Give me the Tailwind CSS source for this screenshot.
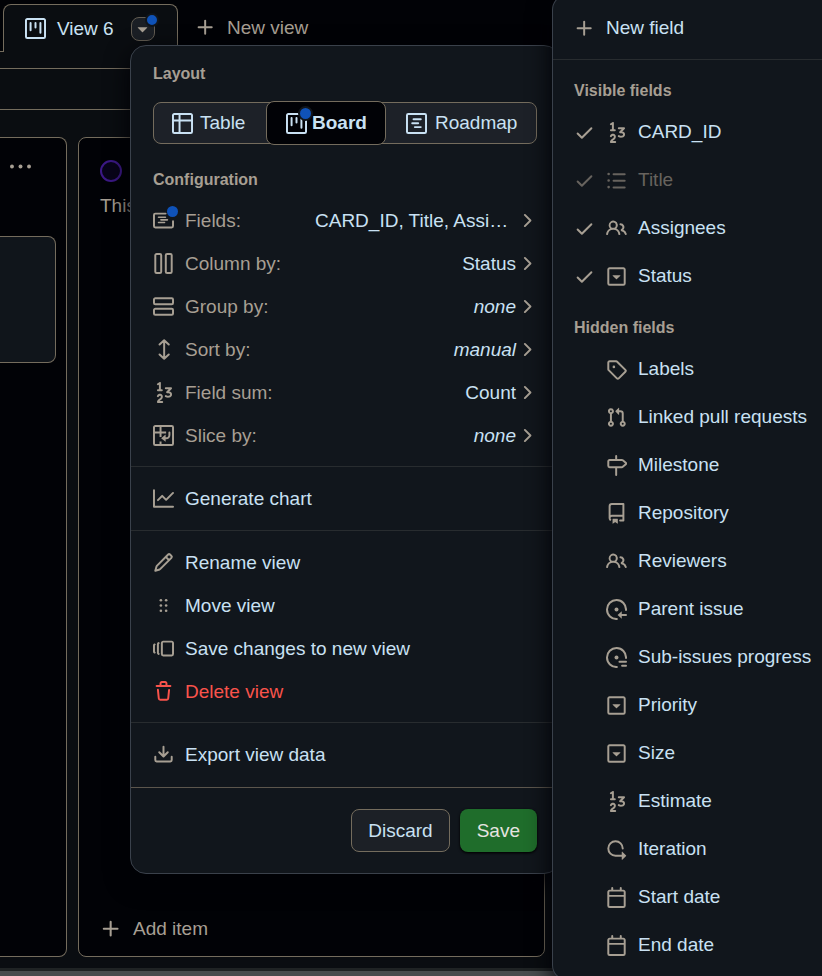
<!DOCTYPE html>
<html lang="en">
<head>
<meta charset="utf-8">
<meta name="viewport" content="width=device-width, initial-scale=1">
<title>Project board</title>
<script src="https://cdn.jsdelivr.net/npm/@tailwindcss/browser@4"></script>
</head>
<body class="bg-[#010206] font-['Liberation_Sans',Arial,sans-serif] text-[19px] leading-6 text-[#c9e1f3]">
<svg class="hidden" aria-hidden="true">
<symbol id="project" viewBox="0 0 16 16"><path d="M1.75 0h12.5C15.216 0 16 .784 16 1.75v12.5A1.75 1.75 0 0 1 14.25 16H1.75A1.75 1.75 0 0 1 0 14.25V1.75C0 .784.784 0 1.75 0ZM1.5 1.75v12.5c0 .138.112.25.25.25h12.5a.25.25 0 0 0 .25-.25V1.75a.25.25 0 0 0-.25-.25H1.75a.25.25 0 0 0-.25.25ZM11.75 3a.75.75 0 0 1 .75.75v7.5a.75.75 0 0 1-1.5 0v-7.5a.75.75 0 0 1 .75-.75Zm-8.25.75a.75.75 0 0 1 1.5 0v5.5a.75.75 0 0 1-1.5 0ZM8 3a.75.75 0 0 1 .75.75v3.5a.75.75 0 0 1-1.5 0v-3.5A.75.75 0 0 1 8 3Z"/></symbol>
<symbol id="table" viewBox="0 0 16 16"><path d="M0 1.75C0 .784.784 0 1.75 0h12.5C15.216 0 16 .784 16 1.75v12.5A1.75 1.75 0 0 1 14.25 16H1.75A1.75 1.75 0 0 1 0 14.25ZM6.5 6.5v8h7.75a.25.25 0 0 0 .25-.25V6.5Zm8-1.5V1.75a.25.25 0 0 0-.25-.25H6.5V5Zm-13 1.5v7.75c0 .138.112.25.25.25H5v-8ZM5 5V1.5H1.75a.25.25 0 0 0-.25.25V5Z"/></symbol>
<symbol id="roadmap" viewBox="0 0 16 16"><rect x=".75" y=".75" width="14.5" height="14.5" rx="1" fill="none" stroke="currentColor" stroke-width="1.5"/><path d="M4.75 7a.75.75 0 0 0 0 1.5h4.5a.75.75 0 0 0 0-1.5h-4.5ZM5 4.75A.75.75 0 0 1 5.75 4h5.5a.75.75 0 0 1 0 1.5h-5.5A.75.75 0 0 1 5 4.75ZM6.75 10a.75.75 0 0 0 0 1.5h4.5a.75.75 0 0 0 0-1.5h-4.5Z"/></symbol>
<symbol id="note" viewBox="0 0 16 16"><path d="M9.6 2.75H1.75a1 1 0 0 0-1 1v8.5a1 1 0 0 0 1 1h12.5a1 1 0 0 0 1-1V8.5" fill="none" stroke="currentColor" stroke-width="1.5" stroke-linecap="round"/><path d="M4.2 5.5h5.3M6 7.5h5M4.2 9.5h4.6" fill="none" stroke="currentColor" stroke-width="1.2" stroke-linecap="round"/></symbol>
<symbol id="columns" viewBox="0 0 16 16"><path d="M2.75.75h2.5a1 1 0 0 1 1 1v12.5a1 1 0 0 1-1 1h-2.5a1 1 0 0 1-1-1V1.75a1 1 0 0 1 1-1Zm8 0h2.5a1 1 0 0 1 1 1v12.5a1 1 0 0 1-1 1h-2.5a1 1 0 0 1-1-1V1.75a1 1 0 0 1 1-1Z" fill="none" stroke="currentColor" stroke-width="1.5"/></symbol>
<symbol id="rows" viewBox="0 0 16 16"><path d="M1.75 1.75h12.5a1 1 0 0 1 1 1v2.5a1 1 0 0 1-1 1H1.75a1 1 0 0 1-1-1v-2.5a1 1 0 0 1 1-1Zm0 8h12.5a1 1 0 0 1 1 1v2.5a1 1 0 0 1-1 1H1.75a1 1 0 0 1-1-1v-2.5a1 1 0 0 1 1-1Z" fill="none" stroke="currentColor" stroke-width="1.5"/></symbol>
<symbol id="sort" viewBox="0 0 16 16"><path d="M8.5 1v14M5 4.2 8.5.9 12 4.2M5 11.8l3.5 3.3 3.5-3.3" fill="none" stroke="currentColor" stroke-width="1.5" stroke-linecap="round" stroke-linejoin="round"/></symbol>
<symbol id="number" viewBox="0 0 16 16"><path d="M9 4.75A.75.75 0 0 1 9.75 4h4a.75.75 0 0 1 .53 1.28l-1.89 1.892c.312.076.604.18.867.319.742.391 1.244 1.063 1.244 2.005 0 .653-.231 1.208-.629 1.627-.386.408-.894.653-1.408.777-1.01.243-2.225.063-3.124-.527a.751.751 0 0 1 .822-1.254c.534.35 1.32.474 1.951.322.306-.073.53-.201.67-.349.129-.136.218-.32.218-.596 0-.308-.123-.509-.444-.678-.373-.197-.98-.318-1.806-.318a.75.75 0 0 1-.53-1.28l1.72-1.72H9.75A.75.75 0 0 1 9 4.75Zm-3.587 5.763c-.35-.05-.77.113-.983.572a.75.75 0 1 1-1.36-.632c.508-1.094 1.589-1.565 2.558-1.425 1 .145 1.872.945 1.872 2.222 0 1.433-1.088 2.192-1.79 2.681-.308.216-.571.397-.772.573H7a.75.75 0 0 1 0 1.5H3.75a.75.75 0 0 1-.75-.75c0-.69.3-1.211.67-1.61.348-.372.8-.676 1.15-.92.8-.56 1.18-.904 1.18-1.474 0-.473-.267-.69-.587-.737ZM5.604.089A.75.75 0 0 1 6 .75v4.77h.711a.75.75 0 0 1 0 1.5H3.759a.75.75 0 0 1 0-1.5H4.5V2.15l-.334.223a.75.75 0 0 1-.832-1.248l1.5-1a.75.75 0 0 1 .77-.037Z"/></symbol>
<symbol id="slice" viewBox="0 0 16 16"><path d="M1.75.75h12.5a1 1 0 0 1 1 1v12.5a1 1 0 0 1-1 1H1.75a1 1 0 0 1-1-1V1.75a1 1 0 0 1 1-1ZM5.75 1v8.2M5.75 12.6V15M1 5.75h9" fill="none" stroke="currentColor" stroke-width="1.5"/><path d="M12.5 5.7v2a2.3 2.3 0 0 1-2.3 2.4H9" fill="none" stroke="currentColor" stroke-width="1.5" stroke-linecap="round"/><path d="M9.6 7.2v5.6L6.2 10.1Z"/></symbol>
<symbol id="chevron" viewBox="0 0 16 16"><path d="M6.22 3.22a.75.75 0 0 1 1.06 0l4.25 4.25a.75.75 0 0 1 0 1.06l-4.25 4.25a.751.751 0 0 1-1.042-.018.751.751 0 0 1-.018-1.042L9.94 8 6.22 4.28a.75.75 0 0 1 0-1.06Z"/></symbol>
<symbol id="caret" viewBox="0 0 16 16"><path d="m4.427 7.427 3.396 3.396a.25.25 0 0 0 .354 0l3.396-3.396A.25.25 0 0 0 11.396 7H4.604a.25.25 0 0 0-.177.427Z"/></symbol>
<symbol id="plus" viewBox="0 0 16 16"><path d="M7.75 2a.75.75 0 0 1 .75.75V7h4.25a.75.75 0 0 1 0 1.5H8.5v4.25a.75.75 0 0 1-1.5 0V8.5H2.75a.75.75 0 0 1 0-1.5H7V2.75A.75.75 0 0 1 7.75 2Z"/></symbol>
<symbol id="kebab" viewBox="0 0 16 16"><circle cx="1.5" cy="8" r="1.5"/><circle cx="8" cy="8" r="1.5"/><circle cx="14.5" cy="8" r="1.5"/></symbol>
<symbol id="graph" viewBox="0 0 16 16"><path d="M1.5 1.75V13.5h13.75a.75.75 0 0 1 0 1.5H.75a.75.75 0 0 1-.75-.75V1.75a.75.75 0 0 1 1.5 0Zm14.28 2.53-5.25 5.25a.75.75 0 0 1-1.06 0L7 7.06 4.28 9.78a.751.751 0 0 1-1.042-.018.751.751 0 0 1-.018-1.042l3.25-3.25a.75.75 0 0 1 1.06 0L10 7.94l4.72-4.72a.751.751 0 0 1 1.042.018.751.751 0 0 1 .018 1.042Z"/></symbol>
<symbol id="pencil" viewBox="0 0 16 16"><path d="M11.013 1.427a1.75 1.75 0 0 1 2.474 0l1.086 1.086a1.75 1.75 0 0 1 0 2.474l-8.61 8.61c-.21.21-.47.364-.756.445l-3.251.93a.75.75 0 0 1-.927-.928l.929-3.25c.081-.286.235-.547.445-.758l8.61-8.61Zm.176 4.823L9.75 4.81l-6.286 6.287a.253.253 0 0 0-.064.108l-.558 1.953 1.953-.558a.253.253 0 0 0 .108-.064Zm1.238-3.763a.25.25 0 0 0-.354 0L10.811 3.75l1.439 1.44 1.263-1.263a.25.25 0 0 0 0-.354Z"/></symbol>
<symbol id="grabber" viewBox="0 0 16 16"><circle cx="6" cy="4" r="1"/><circle cx="10" cy="4" r="1"/><circle cx="6" cy="8" r="1"/><circle cx="10" cy="8" r="1"/><circle cx="6" cy="12" r="1"/><circle cx="10" cy="12" r="1"/></symbol>
<symbol id="versions" viewBox="0 0 16 16"><path d="M7.75 14A1.75 1.75 0 0 1 6 12.25v-8.5C6 2.784 6.784 2 7.75 2h6.5c.966 0 1.75.784 1.75 1.75v8.5A1.75 1.75 0 0 1 14.25 14Zm-.25-1.75c0 .138.112.25.25.25h6.5a.25.25 0 0 0 .25-.25v-8.5a.25.25 0 0 0-.25-.25h-6.5a.25.25 0 0 0-.25.25ZM4.9 3.508a.75.75 0 0 1-.274 1.025.249.249 0 0 0-.126.217v6.5c0 .09.048.173.126.217a.75.75 0 0 1-.752 1.298A1.75 1.75 0 0 1 3 11.25v-6.5c0-.649.353-1.214.874-1.516a.75.75 0 0 1 1.025.274ZM1.625 5.533h.001a.249.249 0 0 0-.126.217v4.5c0 .09.048.173.126.217a.75.75 0 0 1-.752 1.298A1.748 1.748 0 0 1 0 10.25v-4.5a1.748 1.748 0 0 1 .873-1.516.75.75 0 1 1 .752 1.299Z"/></symbol>
<symbol id="trash" viewBox="0 0 16 16"><path d="M11 1.75V3h2.25a.75.75 0 0 1 0 1.5H2.75a.75.75 0 0 1 0-1.5H5V1.75C5 .784 5.784 0 6.75 0h2.5C10.216 0 11 .784 11 1.75ZM4.496 6.675l.66 6.6a.25.25 0 0 0 .249.225h5.19a.25.25 0 0 0 .249-.225l.66-6.6a.75.75 0 0 1 1.492.149l-.66 6.6A1.748 1.748 0 0 1 10.595 15h-5.19a1.75 1.75 0 0 1-1.741-1.575l-.66-6.6a.75.75 0 1 1 1.492-.15ZM6.5 1.75V3h3V1.75a.25.25 0 0 0-.25-.25h-2.5a.25.25 0 0 0-.25.25Z"/></symbol>
<symbol id="download" viewBox="0 0 16 16"><path d="M2.75 14A1.75 1.75 0 0 1 1 12.25v-2.5a.75.75 0 0 1 1.5 0v2.5c0 .138.112.25.25.25h10.5a.25.25 0 0 0 .25-.25v-2.5a.75.75 0 0 1 1.5 0v2.5A1.75 1.75 0 0 1 13.25 14ZM7.25 7.689V2a.75.75 0 0 1 1.5 0v5.689l1.97-1.969a.749.749 0 1 1 1.06 1.06l-3.25 3.25a.749.749 0 0 1-1.06 0L4.22 6.78a.749.749 0 1 1 1.06-1.06l1.97 1.969Z"/></symbol>
<symbol id="check" viewBox="0 0 16 16"><path d="M13.78 4.22a.75.75 0 0 1 0 1.06l-7.25 7.25a.75.75 0 0 1-1.06 0L2.22 9.28a.751.751 0 0 1 .018-1.042.751.751 0 0 1 1.042-.018L6 10.94l6.72-6.72a.75.75 0 0 1 1.06 0Z"/></symbol>
<symbol id="list" viewBox="0 0 16 16"><path d="M5.75 2.5h8.5a.75.75 0 0 1 0 1.5h-8.5a.75.75 0 0 1 0-1.5Zm0 5h8.5a.75.75 0 0 1 0 1.5h-8.5a.75.75 0 0 1 0-1.5Zm0 5h8.5a.75.75 0 0 1 0 1.5h-8.5a.75.75 0 0 1 0-1.5ZM2 14a1 1 0 1 1 0-2 1 1 0 0 1 0 2Zm1-6a1 1 0 1 1-2 0 1 1 0 0 1 2 0ZM2 4a1 1 0 1 1 0-2 1 1 0 0 1 0 2Z"/></symbol>
<symbol id="people" viewBox="0 0 16 16"><path d="M2 5.5a3.5 3.5 0 1 1 5.898 2.549 5.508 5.508 0 0 1 3.034 4.084.75.75 0 1 1-1.482.235 4 4 0 0 0-7.9 0 .75.75 0 0 1-1.482-.236A5.507 5.507 0 0 1 3.102 8.05 3.493 3.493 0 0 1 2 5.5ZM11 4a3.001 3.001 0 0 1 2.22 5.018 5.01 5.01 0 0 1 2.56 3.012.749.749 0 0 1-.885.954.752.752 0 0 1-.549-.514 3.507 3.507 0 0 0-2.522-2.372.75.75 0 0 1-.574-.73v-.352a.75.75 0 0 1 .416-.672A1.5 1.5 0 0 0 11 5.5.75.75 0 0 1 11 4Zm-5.5-.5a2 2 0 1 0-.001 3.999A2 2 0 0 0 5.5 3.5Z"/></symbol>
<symbol id="select" viewBox="0 0 16 16"><path d="m5.06 7.356 2.795 2.833c.08.081.21.081.29 0l2.794-2.833c.13-.131.038-.356-.145-.356H5.206c-.183 0-.275.225-.145.356Z"/><path d="M1 2.75C1 1.784 1.784 1 2.75 1h10.5c.966 0 1.75.784 1.75 1.75v10.5A1.75 1.75 0 0 1 13.25 15H2.75A1.75 1.75 0 0 1 1 13.25Zm1.75-.25a.25.25 0 0 0-.25.25v10.5c0 .138.112.25.25.25h10.5a.25.25 0 0 0 .25-.25V2.75a.25.25 0 0 0-.25-.25Z"/></symbol>
<symbol id="tag" viewBox="0 0 16 16"><path d="M1 7.775V2.75C1 1.784 1.784 1 2.75 1h5.025c.464 0 .91.184 1.238.513l6.25 6.25a1.75 1.75 0 0 1 0 2.474l-5.026 5.026a1.75 1.75 0 0 1-2.474 0l-6.25-6.25A1.752 1.752 0 0 1 1 7.775Zm1.5 0c0 .066.026.13.073.177l6.25 6.25a.25.25 0 0 0 .354 0l5.025-5.025a.25.25 0 0 0 0-.354l-6.25-6.25a.25.25 0 0 0-.177-.073H2.75a.25.25 0 0 0-.25.25ZM6 5a1 1 0 1 1 0 2 1 1 0 0 1 0-2Z"/></symbol>
<symbol id="pull" viewBox="0 0 16 16"><path d="M1.5 3.25a2.25 2.25 0 1 1 3 2.122v5.256a2.251 2.251 0 1 1-1.5 0V5.372A2.25 2.25 0 0 1 1.5 3.25Zm5.677-.177L9.573.677A.25.25 0 0 1 10 .854V2.5h1A2.5 2.5 0 0 1 13.5 5v5.628a2.251 2.251 0 1 1-1.5 0V5a1 1 0 0 0-1-1h-1v1.646a.25.25 0 0 1-.427.177L7.177 3.427a.25.25 0 0 1 0-.354ZM3.75 2.5a.75.75 0 1 0 0 1.5.75.75 0 0 0 0-1.5Zm0 9.5a.75.75 0 1 0 0 1.5.75.75 0 0 0 0-1.5Zm8.25.75a.75.75 0 1 0 1.5 0 .75.75 0 0 0-1.5 0Z"/></symbol>
<symbol id="milestone" viewBox="0 0 16 16"><path d="M7.75 0a.75.75 0 0 1 .75.75V3h3.634c.414 0 .814.147 1.13.414l2.07 1.75a1.75 1.75 0 0 1 0 2.672l-2.07 1.75a1.75 1.75 0 0 1-1.13.414H8.5v5.25a.75.75 0 0 1-1.5 0V10H2.75A1.75 1.75 0 0 1 1 8.25v-3.5C1 3.784 1.784 3 2.75 3H7V.75A.75.75 0 0 1 7.75 0Zm4.384 8.5a.25.25 0 0 0 .161-.06l2.07-1.75a.248.248 0 0 0 0-.38l-2.07-1.75a.25.25 0 0 0-.161-.06H2.75a.25.25 0 0 0-.25.25v3.5c0 .138.112.25.25.25h9.384Z"/></symbol>
<symbol id="repo" viewBox="0 0 16 16"><path d="M2 2.5A2.5 2.5 0 0 1 4.5 0h8.75a.75.75 0 0 1 .75.75v12.5a.75.75 0 0 1-.75.75h-2.5a.75.75 0 0 1 0-1.5h1.75v-2h-8a1 1 0 0 0-.714 1.7.75.75 0 1 1-1.072 1.05A2.495 2.495 0 0 1 2 11.5Zm10.5-1h-8a1 1 0 0 0-1 1v6.708A2.486 2.486 0 0 1 4.5 9h8ZM5 12.25a.25.25 0 0 1 .25-.25h3.5a.25.25 0 0 1 .25.25v3.25a.25.25 0 0 1-.4.2l-1.45-1.087a.249.249 0 0 0-.3 0L5.4 15.7a.25.25 0 0 1-.4-.2Z"/></symbol>
<symbol id="parent" viewBox="0 0 16 16"><path d="M8.3 15.25A7.25 7.25 0 1 1 15.25 8.3M11 12.25h4.25" fill="none" stroke="currentColor" stroke-width="1.5" stroke-linecap="round"/><circle cx="8" cy="8" r="1.5"/><path d="M12 9.4v5.7l-3.2-2.85Z"/></symbol>
<symbol id="subissues" viewBox="0 0 16 16"><path d="M8.3 15.25A7.25 7.25 0 1 1 15.25 8.3M10.25 11.25h5M12.25 14.25h3" fill="none" stroke="currentColor" stroke-width="1.5" stroke-linecap="round"/><circle cx="8" cy="8" r="1.5"/></symbol>
<symbol id="iteration" viewBox="0 0 16 16"><path d="M2.5 7.25a4.75 4.75 0 0 1 9.5 0 .75.75 0 0 0 1.5 0 6.25 6.25 0 1 0-6.25 6.25H12v2.146c0 .223.27.335.427.177l2.896-2.896a.25.25 0 0 0 0-.354l-2.896-2.896a.25.25 0 0 0-.427.177V12H7.25A4.75 4.75 0 0 1 2.5 7.25Z"/></symbol>
<symbol id="calendar" viewBox="0 0 16 16"><path d="M4.75 0a.75.75 0 0 1 .75.75V2h5V.75a.75.75 0 0 1 1.5 0V2h1.25c.966 0 1.75.784 1.75 1.75v10.5A1.75 1.75 0 0 1 13.25 16H2.75A1.75 1.75 0 0 1 1 14.25V3.75C1 2.784 1.784 2 2.75 2H4V.75A.75.75 0 0 1 4.75 0ZM2.5 7.5v6.75c0 .138.112.25.25.25h10.5a.25.25 0 0 0 .25-.25V7.5Zm10.75-4H2.75a.25.25 0 0 0-.25.25V6h11V3.75a.25.25 0 0 0-.25-.25Z"/></symbol>
</svg>

<div class="relative flex h-screen flex-col overflow-hidden">
  <!-- View tabs -->
  <nav class="flex h-[52px] shrink-0 items-end" aria-label="Views">
    <span class="w-[3px] self-stretch border-b border-[#746c5d]"></span>
    <div class="flex h-12 w-[175px] items-center rounded-t-lg border border-b-0 border-[#746c5d] bg-[#0a0d11] pl-[21px]">
      <a href="#" class="flex items-center gap-[11px]"><svg class="size-[21px] fill-current"><use href="#project"/></svg>View 6</a>
      <button class="relative ml-[17px] grid size-6 place-items-center rounded-lg border border-[#625c52] bg-[#1b1f25] text-[#a79f93]" aria-label="View options">
        <svg class="size-[21px] fill-current"><use href="#caret"/></svg>
        <span class="absolute -top-[5px] -right-[5px] size-[14px] rounded-full border-2 border-[#10151b] bg-[#0f52b8]"></span>
      </button>
    </div>
    <div class="flex h-[52px] flex-1 items-center border-b border-[#746c5d] pl-[17px] text-[#a79f93]">
      <button class="flex items-center gap-[11px] pt-1"><svg class="size-[21px] fill-current"><use href="#plus"/></svg><span>New view</span></button>
    </div>
  </nav>

  <!-- Board -->
  <main class="flex min-h-0 flex-1 flex-col bg-[#0a0d11]">
    <div class="mt-4 h-[42px] shrink-0 border-y border-[#746c5d]"></div>
    <div class="mt-[27px] flex min-h-0 flex-1 gap-[11px]">
      <section class="flex w-[67px] shrink-0 flex-col items-end rounded-r-lg border border-l-0 border-[#746c5d] bg-[#010206] pr-[10px]">
        <button class="mt-[18px] mr-[25px] text-[#a79f93]" aria-label="Column options"><svg class="size-[21px] fill-current"><use href="#kebab"/></svg></button>
        <article class="mt-[59px] h-[127px] w-14 rounded-r-lg border border-l-0 border-[#746c5d] bg-[#10151b]"></article>
      </section>
      <section class="flex w-[467px] flex-col rounded-lg border border-[#746c5d] bg-[#010206] px-[21px] text-[#a79f93]">
        <span class="mt-[22px] size-[22px] rounded-full border-2 border-[#3c1987] bg-[#08041a]"></span>
        <p class="mt-3">This</p>
        <button class="mt-auto mb-[15px] flex items-center gap-[11px]"><svg class="size-[22px] fill-current"><use href="#plus"/></svg>Add item</button>
      </section>
    </div>
    <div class="mt-[11px] h-2 shrink-0 border-t-3 border-[#1f2324] bg-[#484c4e]"></div>
  </main>

  <!-- View options menu -->
  <div class="absolute top-[45px] left-[130px] w-[430px] rounded-2xl border border-[#3a414b] bg-[#11161c] shadow-[0_8px_24px_#010206]">
    <section class="px-[22px] pt-4 pb-[9px]">
      <h2 class="text-base leading-6 font-bold text-[#a79f93]">Layout</h2>
      <div class="mt-4 flex h-[42px] rounded-lg border border-[#746c5d] bg-[#1d2128]">
        <button class="flex w-[112px] items-center gap-[7px] pl-[18px]"><svg class="size-[21px] fill-current"><use href="#table"/></svg>Table</button>
        <button class="-my-[2px] flex w-[120px] items-center gap-[5px] rounded-lg border border-[#746c5d] bg-[#010206] pl-[19px] font-bold">
          <span class="relative"><svg class="size-[21px] fill-current"><use href="#project"/></svg><span class="absolute -top-[7px] -right-[6px] size-[15px] rounded-full border-2 border-[#11161c] bg-[#0f52b8]"></span></span>Board</button>
        <button class="flex flex-1 items-center gap-2 pl-5"><svg class="size-[21px] fill-current"><use href="#roadmap"/></svg>Roadmap</button>
      </div>
      <h2 class="mt-6 mb-[7px] text-base leading-6 font-bold text-[#a79f93]">Configuration</h2>
      <ul class="text-[#a79f93]">
        <li><button class="flex h-[43px] w-full items-center"><span class="relative mr-[11px]"><svg class="size-[21px] fill-current"><use href="#note"/></svg><span class="absolute -top-1 -right-1 size-[11px] rounded-full bg-[#0f52b8]"></span></span>Fields:<span class="ml-auto w-[201px] text-left whitespace-nowrap text-[#c9e1f3]">CARD_ID, Title, Assi…</span><svg class="size-[21px] fill-current"><use href="#chevron"/></svg></button></li>
        <li><button class="flex h-[43px] w-full items-center"><svg class="mr-[11px] size-[21px] fill-current"><use href="#columns"/></svg>Column by:<span class="ml-auto text-[#c9e1f3]">Status</span><svg class="size-[21px] fill-current"><use href="#chevron"/></svg></button></li>
        <li><button class="flex h-[43px] w-full items-center"><svg class="mr-[11px] size-[21px] fill-current"><use href="#rows"/></svg>Group by:<em class="ml-auto text-[#c9e1f3]">none</em><svg class="size-[21px] fill-current"><use href="#chevron"/></svg></button></li>
        <li><button class="flex h-[43px] w-full items-center"><svg class="mr-[11px] size-[21px] fill-current"><use href="#sort"/></svg>Sort by:<em class="ml-auto text-[#c9e1f3]">manual</em><svg class="size-[21px] fill-current"><use href="#chevron"/></svg></button></li>
        <li><button class="flex h-[43px] w-full items-center"><svg class="mr-[11px] size-[21px] fill-current"><use href="#number"/></svg>Field sum:<span class="ml-auto text-[#c9e1f3]">Count</span><svg class="size-[21px] fill-current"><use href="#chevron"/></svg></button></li>
        <li><button class="flex h-[43px] w-full items-center"><svg class="mr-[11px] size-[21px] fill-current"><use href="#slice"/></svg>Slice by:<em class="ml-auto text-[#c9e1f3]">none</em><svg class="size-[21px] fill-current"><use href="#chevron"/></svg></button></li>
      </ul>
    </section>
    <section class="border-t border-[#282c2f] px-[22px] py-[10px]">
      <button class="flex h-[43px] w-full items-center gap-[11px]"><svg class="size-[21px] fill-[#a79f93]"><use href="#graph"/></svg>Generate chart</button>
    </section>
    <section class="border-t border-[#282c2f] px-[22px] pt-[10px] pb-[9px]">
      <button class="flex h-[43px] w-full items-center gap-[11px]"><svg class="size-[21px] fill-[#a79f93]"><use href="#pencil"/></svg>Rename view</button>
      <button class="flex h-[43px] w-full items-center gap-[11px]"><svg class="size-[21px] fill-[#a79f93]"><use href="#grabber"/></svg>Move view</button>
      <button class="flex h-[43px] w-full items-center gap-[11px]"><svg class="size-[21px] fill-[#a79f93]"><use href="#versions"/></svg>Save changes to new view</button>
      <button class="flex h-[43px] w-full items-center gap-[11px] text-[#f9534b]"><svg class="size-[21px] fill-current"><use href="#trash"/></svg>Delete view</button>
    </section>
    <section class="border-t border-[#282c2f] px-[22px] pt-[10px] pb-[11px]">
      <button class="flex h-[43px] w-full items-center gap-[11px]"><svg class="size-[21px] fill-[#a79f93]"><use href="#download"/></svg>Export view data</button>
    </section>
    <footer class="flex justify-end gap-[10px] border-t border-[#5c564d] px-[22px] py-[21px]">
      <button class="h-[43px] rounded-lg border border-[#746c5d] bg-[#1c2026] px-4">Discard</button>
      <button class="h-[43px] rounded-lg bg-[#1f6d2b] px-[17px] text-[#e6e4e0] shadow-sm shadow-black">Save</button>
    </footer>
  </div>

  <!-- Field picker -->
  <div class="absolute -top-[6px] right-0 w-[270px] rounded-l-2xl border border-r-0 border-[#3a414b] bg-[#11161c] shadow-[0_8px_24px_#010206]">
    <div class="border-b border-[#282c2f] px-[21px] pt-[9px] pb-[7px]">
      <button class="flex h-12 w-full items-center gap-[11px]"><svg class="size-[21px] fill-[#a79f93]"><use href="#plus"/></svg>New field</button>
    </div>
    <section class="pt-[19px] pl-[21px]">
      <h2 class="mb-[5px] text-base leading-6 font-bold text-[#a79f93]">Visible fields</h2>
      <button class="flex h-12 w-full items-center gap-[11px] whitespace-nowrap"><svg class="size-[21px] fill-[#a79f93]"><use href="#check"/></svg><svg class="size-[21px] fill-[#a79f93]"><use href="#number"/></svg>CARD_ID</button>
      <button class="flex h-12 w-full items-center gap-[11px] whitespace-nowrap text-[#67635e]" disabled><svg class="size-[21px] fill-current"><use href="#check"/></svg><svg class="size-[21px] fill-current"><use href="#list"/></svg>Title</button>
      <button class="flex h-12 w-full items-center gap-[11px] whitespace-nowrap"><svg class="size-[21px] fill-[#a79f93]"><use href="#check"/></svg><svg class="size-[21px] fill-[#a79f93]"><use href="#people"/></svg>Assignees</button>
      <button class="flex h-12 w-full items-center gap-[11px] whitespace-nowrap"><svg class="size-[21px] fill-[#a79f93]"><use href="#check"/></svg><svg class="size-[21px] fill-[#a79f93]"><use href="#select"/></svg>Status</button>
    </section>
    <section class="pt-4 pb-[11px] pl-[21px]">
      <h2 class="mb-[5px] text-base leading-6 font-bold text-[#a79f93]">Hidden fields</h2>
      <div class="pl-8">
        <button class="flex h-12 w-full items-center gap-[11px] whitespace-nowrap"><svg class="size-[21px] fill-[#a79f93]"><use href="#tag"/></svg>Labels</button>
        <button class="flex h-12 w-full items-center gap-[11px] whitespace-nowrap"><svg class="size-[21px] fill-[#a79f93]"><use href="#pull"/></svg>Linked pull requests</button>
        <button class="flex h-12 w-full items-center gap-[11px] whitespace-nowrap"><svg class="size-[21px] fill-[#a79f93]"><use href="#milestone"/></svg>Milestone</button>
        <button class="flex h-12 w-full items-center gap-[11px] whitespace-nowrap"><svg class="size-[21px] fill-[#a79f93]"><use href="#repo"/></svg>Repository</button>
        <button class="flex h-12 w-full items-center gap-[11px] whitespace-nowrap"><svg class="size-[21px] fill-[#a79f93]"><use href="#people"/></svg>Reviewers</button>
        <button class="flex h-12 w-full items-center gap-[11px] whitespace-nowrap"><svg class="size-[21px] shrink-0 fill-[#a79f93] text-[#a79f93]"><use href="#parent"/></svg>Parent issue</button>
        <button class="flex h-12 w-full items-center gap-[11px] whitespace-nowrap"><svg class="size-[21px] shrink-0 fill-[#a79f93] text-[#a79f93]"><use href="#subissues"/></svg>Sub-issues progress</button>
        <button class="flex h-12 w-full items-center gap-[11px] whitespace-nowrap"><svg class="size-[21px] fill-[#a79f93]"><use href="#select"/></svg>Priority</button>
        <button class="flex h-12 w-full items-center gap-[11px] whitespace-nowrap"><svg class="size-[21px] fill-[#a79f93]"><use href="#select"/></svg>Size</button>
        <button class="flex h-12 w-full items-center gap-[11px] whitespace-nowrap"><svg class="size-[21px] fill-[#a79f93]"><use href="#number"/></svg>Estimate</button>
        <button class="flex h-12 w-full items-center gap-[11px] whitespace-nowrap"><svg class="size-[21px] fill-[#a79f93]"><use href="#iteration"/></svg>Iteration</button>
        <button class="flex h-12 w-full items-center gap-[11px] whitespace-nowrap"><svg class="size-[21px] fill-[#a79f93]"><use href="#calendar"/></svg>Start date</button>
        <button class="flex h-12 w-full items-center gap-[11px] whitespace-nowrap"><svg class="size-[21px] fill-[#a79f93]"><use href="#calendar"/></svg>End date</button>
      </div>
    </section>
  </div>
</div>
</body>
</html>
